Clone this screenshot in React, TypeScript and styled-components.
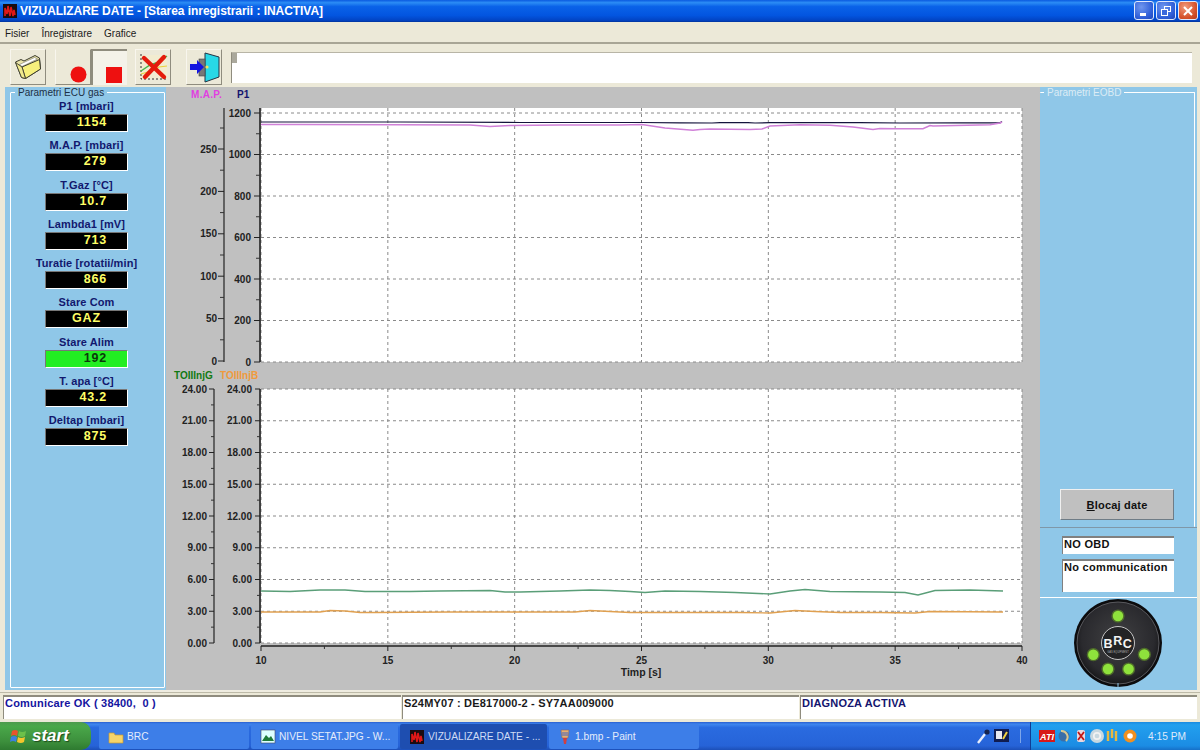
import React from "react";
import styled, { createGlobalStyle } from "styled-components";

const Global = createGlobalStyle`
  html, body { margin: 0; padding: 0; width: 1200px; height: 750px; overflow: hidden; background: #ece9d8; }
  * { box-sizing: border-box; }
  body { font-family: "Liberation Sans", Arial, sans-serif; }
`;

const Screen = styled.div`
  width: 1200px; height: 750px; display: flex; flex-direction: column; background: #ece9d8; overflow: hidden;
`;
const TitleBar = styled.div`
  height: 22px; flex: none; display: flex; align-items: center; padding: 0 2px 0 2px; gap: 2px;
  background: linear-gradient(180deg, #0a5ae0 0%, #2b8cf5 12%, #0a62e8 30%, #0355e0 70%, #0244c4 92%, #01339c 100%);
`;
const TitleText = styled.span`
  flex: 1; color: #fff; font-weight: 700; font-size: 12px; letter-spacing: -0.05px; white-space: nowrap;
`;
const WinBtn = styled.button<{ $close?: boolean }>`
  width: 20px; height: 19px; padding: 0; margin: 0; display: flex; align-items: center; justify-content: center;
  border: 1px solid #dfe8fb; border-radius: 3px;
  background: ${p => p.$close
    ? "radial-gradient(circle at 35% 30%, #f09a7c, #d4512a 65%, #b83a1a)"
    : "radial-gradient(circle at 35% 30%, #6f96ee, #2f5fd8 65%, #2046b8)"};
`;
const WinGroup = styled.div`display: flex; gap: 2px; margin-top: -1px;`;
const MenuBar = styled.div`
  height: 22px; flex: none; display: flex; align-items: center; gap: 12px; padding: 2px 5px 0;
  font-size: 10px; color: #1a1a1a; border-bottom: 2px solid #a8a595;
`;
const MenuItem = styled.span``;
const ToolBar = styled.div`
  height: 43px; flex: none; display: flex; align-items: center; padding: 2px 8px 0 10px;
`;
const ToolBtn = styled.button<{ $gap?: number }>`
  width: 36px; height: 36px; padding: 0; margin: 0 0 0 ${p => p.$gap ?? 0}px;
  display: flex; align-items: center; justify-content: center;
  background: #ece9d8; border: 1px solid; border-color: #f8f6ee #8f8c7e #8f8c7e #f8f6ee;
`;
const RecBtn = styled(ToolBtn)`
  align-items: flex-end; justify-content: flex-end; padding: 0 3px 1px 0; border-top-color: #ece9d8;
`;
const StopBtn = styled(RecBtn)`
  background: #f4f2e9; border-width: 2px 0 0 2px; border-color: #8f8c7e transparent transparent #8f8c7e; padding: 0 4px 2px 0;
`;
const PathBox = styled.div`
  flex: 1; height: 31px; margin: 2px 0 0 9px; background: #fff; border-left: 1px solid #8f8c7e;
  border-top: 1px solid #b8b5a6;
`;
const PathKnob = styled.div`width: 5px; height: 10px; background: #aaa89c;`;
const Main = styled.div`
  height: 603px; flex: none; display: flex; padding-left: 5px; padding-right: 3px;
`;
const LeftPanel = styled.div`
  width: 161px; flex: none; background: #8fc7e8; padding: 0 1px 2px 5px; display: flex;
`;
const Field = styled.fieldset`
  margin: 0; padding: 0; flex: 1; min-width: 0; border: 1px solid #fff; border-radius: 1px;
  display: flex; flex-direction: column; align-items: center;
`;
const Legend = styled.legend<{ $dim?: boolean }>`
  margin-left: 4px; padding: 0 3px; font-size: 10px; line-height: 11px;
  color: ${p => p.$dim ? "#dcecf5" : "#1d2f45"}; white-space: nowrap;
`;
const Gauges = styled.div`
  margin-top: 1px; margin-left: -2px; width: 100%; display: flex; flex-direction: column; align-items: center;
`;
const Gauge = styled.div`
  height: 39.25px; display: flex; flex-direction: column; align-items: center; flex: none;
`;
const GaugeLabel = styled.div`
  font-size: 11px; font-weight: 700; color: #12186e; line-height: 15px; letter-spacing: 0.1px; white-space: nowrap;
`;
const GaugeValue = styled.div<{ $lit?: boolean; $center?: boolean }>`
  width: 83px; height: 18px; font-size: 12.5px; font-weight: 700; line-height: 15px; letter-spacing: 0.8px;
  text-align: ${p => p.$center ? "center" : "right"}; padding-right: ${p => p.$center ? 0 : 20}px;
  color: ${p => p.$lit ? "#0a3a0a" : "#ffff66"}; background: ${p => p.$lit ? "#22ee22" : "#000"};
  border: 1px solid; border-color: #777 #fff #fff #777;
`;
const Center = styled.div`width: 874px; flex: none; background: #c0c0c0;`;
const ChartSvg = styled.svg`display: block; width: 874px; height: 603px;`;
const RightPanel = styled.div`
  width: 157px; flex: none; background: #8fc7e8; display: flex; flex-direction: column;
`;
const RightTop = styled.div`
  height: 441px; flex: none; padding: 0 2px 0 0; display: flex; border-bottom: 1px solid #7f97a8;
`;
const TopField = styled(Field)`
  align-items: center; justify-content: flex-end; padding-bottom: 7px; border-bottom: none; border-left: none;
`;
const BlockBtn = styled.button`
  width: 114px; height: 31px; padding: 0; background: #c0c0c0; color: #111; font-family: inherit;
  font-size: 11px; font-weight: 700; letter-spacing: 0.2px;
  border: 1.5px solid; border-color: #f0f0f0 #6f7c86 #6f7c86 #f0f0f0;
  & u { text-decoration: underline; }
`;
const ObdBox = styled.div`
  height: 70px; flex: none; display: flex; flex-direction: column; gap: 5px; padding: 8px 23px 0 22px;
  border-bottom: 1px solid #fff;
`;
const ObdField = styled.div<{ $tall?: boolean }>`
  height: ${p => p.$tall ? 33 : 18}px; background: #fff; color: #111; font-size: 11px; font-weight: 700;
  line-height: 13px; padding-left: 1px; letter-spacing: 0.3px; white-space: nowrap;
  border-top: 2px solid #808080; border-left: 1px solid #808080;
`;
const LogoBox = styled.div`flex: 1; display: flex; justify-content: center; padding-right: 2px;`;
const StatusBar = styled.div`
  height: 32px; flex: none; display: grid; grid-template-columns: 398px 397px 1fr; gap: 1px;
  padding: 3px 3px 3px 3px; border-top: 2px solid #efece0; box-shadow: inset 0 1px 0 #bdbaa8;
`;
const StatusCell = styled.div<{ $color: string }>`
  background: #fff; color: ${p => p.$color}; font-size: 11px; font-weight: 700; line-height: 13px;
  padding-left: 1px; letter-spacing: 0.2px; white-space: pre;
  border-top: 2px solid #8f8c7e; border-left: 1px solid #8f8c7e;
`;
const TaskBar = styled.div`
  height: 28px; flex: none; display: flex; align-items: stretch;
  background: linear-gradient(180deg, #2a5fd0 0%, #3f86ee 8%, #2a6be0 20%, #2663d8 85%, #1c4fb8 100%);
`;
const StartBtn = styled.div`
  width: 91px; flex: none; display: flex; align-items: center; gap: 4px; padding-left: 10px;
  border-radius: 0 10px 10px 0;
  background: linear-gradient(180deg, #4e9a4e 0%, #4aa84a 15%, #3c8f3c 70%, #2e7a30 100%);
  color: #fff; font-size: 17px; font-weight: 700; font-style: italic; text-shadow: 1px 1px 1px #1c4a1c;
`;
const TaskButtons = styled.div`flex: 1; display: flex; gap: 2px; padding: 2px 0 1px 8px; min-width: 0;`;
const TaskBtn = styled.div<{ $active?: boolean; $w: number }>`
  width: ${p => p.$w}px; flex: none; display: flex; align-items: center; gap: 3px; padding-left: 9px;
  border-radius: 2px; font-size: 10.2px; white-space: nowrap; overflow: hidden;
  color: ${p => p.$active ? "#cfdcf5" : "#e4ecfb"};
  background: ${p => p.$active ? "#1e4eb0" : "#3d7ee8"};
`;
const QuickTray = styled.div`display: flex; align-items: center; gap: 1px; padding-right: 9px;`;
const Sep = styled.div`width: 1px; height: 14px; background: #7ea6ea; margin-left: 8px;`;
const Tray = styled.div`
  width: 170px; flex: none; display: flex; align-items: center; padding-left: 8px; gap: 1px; color: #dfeafb; font-size: 10.2px;
  background: linear-gradient(180deg, #1a8ae0 0%, #22a0ee 10%, #1b8ce4 85%, #1670c8 100%);
  border-left: 1px solid #103c94;
`;
const Clock = styled.span`margin-left: auto; margin-right: 14px;`;

/* ---------- Icons ---------- */
const AppIcon = ({ s = 16 }: { s?: number }) => (
  <svg width={s} height={s} viewBox="0 0 16 16">
    <rect x="1" y="1" width="14" height="14" fill="#1a0c10" />
    <path d="M3 13V5l2 6 1-8 2 10 1-9 2 9 1-6 1 5" fill="none" stroke="#e01818" strokeWidth="1.6" />
  </svg>
);
const MinGlyph = () => <svg width="12" height="12" viewBox="0 0 12 12"><rect x="2" y="8" width="6" height="3" fill="#fff" /></svg>;
const RestoreGlyph = () => (
  <svg width="12" height="12" viewBox="0 0 12 12" fill="none" stroke="#fff">
    <rect x="4.5" y="1.5" width="6" height="5" /><rect x="1.5" y="4.5" width="6" height="6" fill="#3a68dc" />
  </svg>
);
const CloseGlyph = () => (
  <svg width="12" height="12" viewBox="0 0 12 12"><path d="M2 2l8 8M10 2l-8 8" stroke="#fff" strokeWidth="2" /></svg>
);
const FolderIcon = () => (
  <svg width="28" height="30" viewBox="0 0 28 30">
    <path d="M1.5 10L7 7.5 10 9 21 3.5 25.5 6 26.5 17 11.5 26.5 7.5 25.5z" fill="#e9e3a8" stroke="#3c3c30" strokeWidth="1" strokeLinejoin="round" />
    <path d="M5.5 12.5L20.5 5.5 23.5 7 8 14.5z" fill="#ffffff" stroke="#77776a" strokeWidth=".6" />
    <path d="M8 15L25.5 7.5 26.5 17 11.5 26.5z" fill="#f7f07c" stroke="#3c3c30" strokeWidth="1" strokeLinejoin="round" />
    <path d="M1.5 10.5L8 15 11.5 26.5 7.5 25.5z" fill="#f0e98e" stroke="#3c3c30" strokeWidth=".9" strokeLinejoin="round" />
  </svg>
);
const XChartIcon = () => (
  <svg width="32" height="32" viewBox="0 0 32 32">
    <rect x="3" y="4" width="27" height="24" fill="#f2ecd0" />
    <path d="M4 3v25h26" stroke="#333" fill="none" strokeDasharray="2 2" />
    <path d="M4 20L13 14 22 11 30 5" stroke="#45b84a" strokeWidth="1.4" fill="none" />
    <path d="M4 23L14 20 22 16 30 15" stroke="#e8d040" strokeWidth="1.2" fill="none" />
    <path d="M7 7L27 26M27 6L8 26" stroke="#e41c0c" strokeWidth="4.4" strokeLinecap="round" />
  </svg>
);
const ExitIcon = () => (
  <svg width="32" height="32" viewBox="0 0 32 32">
    <path d="M17 2l14 4v20l-14 5z" fill="#28d8e6" stroke="#234" />
    <rect x="11" y="8" width="6" height="17" fill="#777" stroke="#444" strokeWidth=".6" />
    <path d="M2 13h7v-4l7 7-7 7v-4H2z" fill="#1414e0" />
    <circle cx="19" cy="16" r="1.6" fill="#f4e060" />
  </svg>
);
const WinFlag = () => (
  <svg width="18" height="17" viewBox="0 0 18 17">
    <path d="M2 3q3-2 6 0l-1 5q-3-2-6 0z" fill="#e8542a" />
    <path d="M9 3q3 2 7 0l-1 5q-3 2-7 0z" fill="#6cc04a" />
    <path d="M1 9q3-2 6 0l-1 5q-3-2-6 0z" fill="#3d7fe0" />
    <path d="M8 9q3 2 7 0l-1 5q-3 2-7 0z" fill="#f4c62c" />
  </svg>
);
const FolderMini = () => (
  <svg width="16" height="14" viewBox="0 0 16 14">
    <path d="M1 3h5l1 2h8v8H1z" fill="#f6d46a" stroke="#c89a30" strokeWidth=".7" />
  </svg>
);
const PictureMini = () => (
  <svg width="16" height="15" viewBox="0 0 16 15">
    <rect x="1" y="1" width="14" height="13" fill="#dff" stroke="#446" strokeWidth=".6" />
    <path d="M2 12l4-6 3 3 2-2 3 5z" fill="#1f7a3a" />
  </svg>
);
const PaintMini = () => (
  <svg width="14" height="16" viewBox="0 0 14 16">
    <path d="M3 1h8l-1 8H4z" fill="#e8b070" stroke="#866" strokeWidth=".6" />
    <path d="M5 9h4l-1 6H6z" fill="#d04040" />
    <path d="M5 3v4M7 3v4M9 3v4" stroke="#4060c0" />
  </svg>
);
const Tool = () => (
  <svg width="16" height="18" viewBox="0 0 16 18">
    <path d="M3 16L10 7" stroke="#e8eefc" strokeWidth="2.4" /><circle cx="12" cy="5" r="2.6" fill="#16244e" />
  </svg>
);
const Doc = () => (
  <svg width="19" height="18" viewBox="0 0 19 18">
    <rect x="2" y="2" width="15" height="13" fill="#101c50" />
    <rect x="4" y="4" width="6" height="8" fill="#e8e8f0" /><path d="M11 12l4-7" stroke="#f0d040" strokeWidth="2" />
  </svg>
);
const TrayIcons = () => (
  <svg width="100" height="18" viewBox="0 0 100 18">
    <rect x="0" y="3" width="16" height="12" fill="#d81818" />
    <text x="8" y="13" textAnchor="middle" fontSize="9" fontWeight="700" fontStyle="italic" fill="#fff" fontFamily="Liberation Sans, sans-serif">ATI</text>
    <circle cx="25" cy="9" r="5.5" fill="#3a6ea8" /><path d="M22 4a6 6 0 0 1 5 10" stroke="#d8c890" strokeWidth="2" fill="none" />
    <rect x="38" y="3" width="8" height="12" rx="2" fill="#e8d8e0" /><path d="M39 5l6 8M45 5l-6 8" stroke="#c01818" strokeWidth="1.8" />
    <circle cx="58" cy="9" r="7" fill="#c8d8e0" /><circle cx="58" cy="9" r="3.2" fill="none" stroke="#f2f2f2" strokeWidth="1.7" />
    <path d="M69 4v10M73 2v9M77 4v10" stroke="#e8b840" strokeWidth="2.4" />
    <circle cx="91" cy="9" r="6.5" fill="#f09020" /><circle cx="91" cy="9" r="2.8" fill="#fff" />
  </svg>
);
const RecDot = () => <svg width="17" height="17" viewBox="0 0 17 17"><circle cx="8.5" cy="8.5" r="8" fill="#ee1010" /></svg>;
const StopSquare = () => <svg width="17" height="17" viewBox="0 0 17 17"><rect width="16" height="16" y="1" fill="#ee1010" /></svg>;

const BrcLogo = () => (
  <svg width="92" height="92" viewBox="0 0 92 92">
    <defs>
      <radialGradient id="disc" cx="50%" cy="45%" r="55%">
        <stop offset="0%" stopColor="#404042" /><stop offset="80%" stopColor="#2a2a2e" /><stop offset="100%" stopColor="#18181a" />
      </radialGradient>
    </defs>
    <circle cx="46" cy="45" r="44" fill="#0c0c0e" />
    <circle cx="46" cy="45" r="41" fill="url(#disc)" stroke="#6a6a6e" strokeWidth=".8" />
    <path d="M46 85v4" stroke="#8fc7e8" strokeWidth="1" />
    <circle cx="46" cy="45" r="16.5" fill="#232325" stroke="#c4c4c4" strokeWidth="1" />
    <text x="46" y="50" textAnchor="middle" fill="#f4f4f4" fontSize="12.5" fontWeight="700" fontFamily="Liberation Sans, sans-serif" letterSpacing="0.6">
      B<tspan dy="-3">R</tspan><tspan dy="3">C</tspan>
    </text>
    <text x="46" y="55" textAnchor="middle" fill="#aaa" fontSize="2.6" fontFamily="Liberation Sans, sans-serif">GAS EQUIPMENT</text>
    {[[46, 18], [21.3, 56.7], [72.3, 56.4], [36, 71], [56.6, 71]].map(([x, y]) => (
      <g key={`${x}-${y}`}>
        <circle cx={x} cy={y} r="6.6" fill="#4f6e2a" />
        <circle cx={x} cy={y} r="5.2" fill="#8fe23c" />
      </g>
    ))}
  </svg>
);

/* ---------- Chart (drawing) ---------- */
const PX0 = 261, PX1 = 1022;
const xAt = (t: number) => PX0 + ((t - 10) * (PX1 - PX0)) / 30;
const FONT = "Liberation Sans, sans-serif";
const TOP_T = 108, TOP_B = 362, BOT_T = 389, BOT_B = 643;

const poly = (pts: number[][]) => pts.map(p => p.join(",")).join(" ");
const P1_LINE = [[261, 122], [330, 122], [395, 122], [400, 122], [520, 122.5], [600, 122.5], [642, 122.5], [680, 122.8], [712, 123], [720, 122.6], [748, 122.6], [755, 123], [770, 122.7], [838, 122.7], [860, 122.6], [900, 123], [960, 122.8], [1000, 122.8], [1002, 121.5]];
const MAP_LINE = [[261, 124.5], [300, 124.5], [400, 124.8], [470, 125], [490, 126.5], [510, 125.5], [560, 125], [620, 125], [642, 124.5], [665, 128], [693, 130.3], [700, 129.5], [710, 129], [750, 129.5], [762, 129], [770, 126], [800, 124.7], [830, 125.2], [853, 127], [873, 129.5], [880, 128.5], [897, 128.8], [923, 128.7], [930, 125.5], [933, 126], [990, 124.8], [1000, 123], [1002, 122]];
const G_LINE = [[261, 591], [290, 591.5], [320, 590], [345, 590], [365, 591.5], [410, 591.5], [440, 591], [490, 590.5], [505, 592], [520, 592], [560, 591], [590, 590], [610, 590.5], [630, 591.5], [645, 592.5], [665, 591], [700, 591.5], [735, 592.5], [770, 594], [790, 591], [805, 589.5], [830, 591.5], [880, 592], [905, 592.5], [918, 595], [935, 590.5], [970, 590], [1003, 591]];
const O_LINE = [[261, 612], [320, 612], [330, 610.5], [345, 611], [360, 612.5], [375, 612.5], [450, 612], [575, 612], [590, 610.5], [600, 611], [630, 612.5], [680, 612.5], [740, 612.5], [770, 613], [795, 610.5], [815, 611.5], [840, 612.5], [880, 612.5], [915, 613], [930, 611.5], [1003, 612]];

const Charts = () => {
  const topY = [1200, 1000, 800, 600, 400, 200, 0].map((v, i) => ({ v, y: 113 + i * 41.5 }));
  const top2 = [250, 200, 150, 100, 50, 0].map((v, i) => ({ v, y: 149 + i * 42.4 }));
  const botY = [24, 21, 18, 15, 12, 9, 6, 3, 0].map((v, i) => ({ v: v.toFixed(2), y: BOT_T + i * 31.75 }));
  const xs = [10, 15, 20, 25, 30, 35, 40];
  const AxisLabel = ({ x, y, t }: { x: number; y: number; t: string | number }) => (
    <text x={x} y={y + 3.5} textAnchor="end" fontSize="10" fontWeight="700" fill="#222" fontFamily={FONT}>{t}</text>
  );
  const dash = { stroke: "#8a8a8a", strokeWidth: 1, strokeDasharray: "3 3" };
  return (
    <ChartSvg viewBox="166 87 874 603">
      <rect x={PX0} y={TOP_T} width={PX1 - PX0} height={TOP_B - TOP_T} fill="#fff" />
      <rect x={PX0} y={BOT_T} width={PX1 - PX0} height={BOT_B - BOT_T} fill="#fff" />
      {topY.map(({ y }) => <line key={`t${y}`} x1={PX0} x2={PX1} y1={y} y2={y} {...dash} />)}
      {botY.map(({ y }) => <line key={`b${y}`} x1={PX0} x2={PX1} y1={y} y2={y} {...dash} />)}
      {xs.map(t => (
        <g key={t}>
          <line x1={xAt(t)} x2={xAt(t)} y1={TOP_T} y2={TOP_B} {...dash} />
          <line x1={xAt(t)} x2={xAt(t)} y1={BOT_T} y2={BOT_B} {...dash} />
        </g>
      ))}
      <text x="191" y="98" fontSize="10" fontWeight="700" fill="#e040e0" fontFamily={FONT} letterSpacing="0.3">M.A.P.</text>
      <text x="237" y="98" fontSize="10" fontWeight="700" fill="#14146e" fontFamily={FONT}>P1</text>
      <text x="174" y="379" fontSize="10" fontWeight="700" fill="#127a12" fontFamily={FONT}>TOIIInjG</text>
      <text x="220" y="379" fontSize="10" fontWeight="700" fill="#f09a3c" fontFamily={FONT}>TOIIInjB</text>
      <line x1="224" x2="224" y1="108" y2="362" stroke="#222" strokeWidth="1.2" />
      <line x1="260" x2="260" y1="108" y2="362" stroke="#222" strokeWidth="1.6" />
      {topY.map(({ v, y }) => (
        <g key={v}>
          <AxisLabel x={251} y={y} t={v} />
          <line x1="254" x2="260" y1={y} y2={y} stroke="#222" />
          {v > 0 && <line x1="256" x2="260" y1={y + 20.75} y2={y + 20.75} stroke="#333" />}
        </g>
      ))}
      {top2.map(({ v, y }) => (
        <g key={v}>
          <AxisLabel x={217} y={y} t={v} />
          <line x1="218" x2="224" y1={y} y2={y} stroke="#222" />
          {v > 0 && <line x1="220" x2="224" y1={y + 21.2} y2={y + 21.2} stroke="#333" />}
        </g>
      ))}
      <line x1="220" x2="224" y1="128" y2="128" stroke="#333" />
      <line x1="214" x2="214" y1={BOT_T} y2={BOT_B} stroke="#222" strokeWidth="1.2" />
      <line x1="260" x2="260" y1={BOT_T} y2={BOT_B} stroke="#222" strokeWidth="1.6" />
      {botY.map(({ v, y }, i) => (
        <g key={v}>
          <AxisLabel x={207} y={y} t={v} />
          <AxisLabel x={252} y={y} t={v} />
          <line x1="209" x2="214" y1={y} y2={y} stroke="#222" />
          <line x1="255" x2="260" y1={y} y2={y} stroke="#222" />
          {i < 8 && <line x1="211" x2="214" y1={y + 15.9} y2={y + 15.9} stroke="#333" />}
          {i < 8 && <line x1="257" x2="260" y1={y + 15.9} y2={y + 15.9} stroke="#333" />}
        </g>
      ))}
      <line x1={PX0} x2={PX1} y1="646" y2="646" stroke="#222" strokeWidth="1.4" />
      {xs.map(t => (
        <g key={t}>
          <line x1={xAt(t)} x2={xAt(t)} y1="646" y2="651" stroke="#222" />
          {t < 40 && <line x1={xAt(t + 2.5)} x2={xAt(t + 2.5)} y1="646" y2="649" stroke="#333" />}
          <text x={xAt(t)} y="664" textAnchor="middle" fontSize="10" fontWeight="700" fill="#222" fontFamily={FONT}>{t}</text>
        </g>
      ))}
      <text x="641" y="676" textAnchor="middle" fontSize="10.5" fontWeight="700" fill="#222" fontFamily={FONT}>Timp [s]</text>
      <polyline points={poly(P1_LINE)} fill="none" stroke="#14143c" strokeWidth="1.2" />
      <polyline points={poly(MAP_LINE)} fill="none" stroke="#d080d8" strokeWidth="1.6" />
      <polyline points={poly(G_LINE)} fill="none" stroke="#5a9e78" strokeWidth="1.4" />
      <polyline points={poly(O_LINE)} fill="none" stroke="#e0a050" strokeWidth="1.3" />
    </ChartSvg>
  );
};

const GAUGES: { label: string; value: string; lit?: boolean; center?: boolean }[] = [
  { label: "P1 [mbari]", value: "1154" },
  { label: "M.A.P. [mbari]", value: "279" },
  { label: "T.Gaz [°C]", value: "10.7" },
  { label: "Lambda1 [mV]", value: "713" },
  { label: "Turatie [rotatii/min]", value: "866" },
  { label: "Stare Com", value: "GAZ", center: true },
  { label: "Stare Alim", value: "192", lit: true },
  { label: "T. apa [°C]", value: "43.2" },
  { label: "Deltap [mbari]", value: "875" },
];

export default function App() {
  return (
    <Screen>
      <Global />
      <TitleBar>
        <AppIcon />
        <TitleText>VIZUALIZARE DATE - [Starea inregistrarii : INACTIVA]</TitleText>
        <WinGroup>
          <WinBtn><MinGlyph /></WinBtn>
          <WinBtn><RestoreGlyph /></WinBtn>
          <WinBtn $close><CloseGlyph /></WinBtn>
        </WinGroup>
      </TitleBar>
      <MenuBar>
        <MenuItem>Fisier</MenuItem>
        <MenuItem>Înregistrare</MenuItem>
        <MenuItem>Grafice</MenuItem>
      </MenuBar>
      <ToolBar>
        <ToolBtn><FolderIcon /></ToolBtn>
        <RecBtn $gap={9}><RecDot /></RecBtn>
        <StopBtn><StopSquare /></StopBtn>
        <ToolBtn $gap={8}><XChartIcon /></ToolBtn>
        <ToolBtn $gap={15}><ExitIcon /></ToolBtn>
        <PathBox><PathKnob /></PathBox>
      </ToolBar>
      <Main>
        <LeftPanel>
          <Field>
            <Legend>Parametri ECU gas</Legend>
            <Gauges>
              {GAUGES.map(g => (
                <Gauge key={g.label}>
                  <GaugeLabel>{g.label}</GaugeLabel>
                  <GaugeValue $lit={g.lit} $center={g.center}>{g.value}</GaugeValue>
                </Gauge>
              ))}
            </Gauges>
          </Field>
        </LeftPanel>
        <Center><Charts /></Center>
        <RightPanel>
          <RightTop>
            <TopField>
              <Legend $dim>Parametri EOBD</Legend>
              <BlockBtn><u>B</u>locaj date</BlockBtn>
            </TopField>
          </RightTop>
          <ObdBox>
            <ObdField>NO OBD</ObdField>
            <ObdField $tall>No communication</ObdField>
          </ObdBox>
          <LogoBox><BrcLogo /></LogoBox>
        </RightPanel>
      </Main>
      <StatusBar>
        <StatusCell $color="#1414a0">Comunicare OK ( 38400,  0 )</StatusCell>
        <StatusCell $color="#1a1a1a">S24MY07 : DE817000-2 - SY7AA009000</StatusCell>
        <StatusCell $color="#14146e">DIAGNOZA ACTIVA</StatusCell>
      </StatusBar>
      <TaskBar>
        <StartBtn><WinFlag />start</StartBtn>
        <TaskButtons>
          <TaskBtn $w={150}><FolderMini />BRC</TaskBtn>
          <TaskBtn $w={147}><PictureMini />NIVEL SETAT.JPG - W...</TaskBtn>
          <TaskBtn $w={147} $active><AppIcon />VIZUALIZARE DATE - ...</TaskBtn>
          <TaskBtn $w={150}><PaintMini />1.bmp - Paint</TaskBtn>
        </TaskButtons>
        <QuickTray><Tool /><Doc /><Sep /></QuickTray>
        <Tray><TrayIcons /><Clock>4:15 PM</Clock></Tray>
      </TaskBar>
    </Screen>
  );
}
